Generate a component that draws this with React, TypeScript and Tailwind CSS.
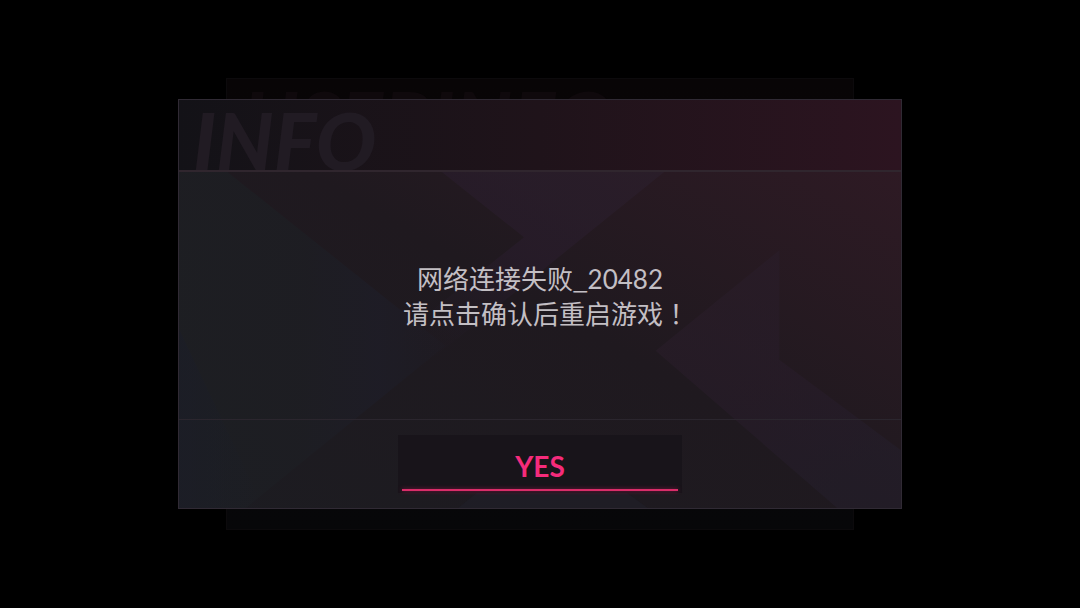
const facets = [
  { points: '0,71 47,71 267,247 67,410 0,410', fill: 'url(#facet-left)', opacity: 0.8 },
  { points: '0,230 85,410 0,410', fill: 'url(#facet-corner)', opacity: 0.7 },
  { points: '262,71 488,71 372,165 222,286 205,250 346,138', fill: 'url(#facet-top)', opacity: 0.7 },
  { points: '602,151 602,261 724,352 724,410 660,410 478,252', fill: 'url(#facet-right)', opacity: 0.6 },
  { points: '370,337 470,410 280,410', fill: '#20202a', opacity: 0.6 },
]

function Facets() {
  return (
    <svg
      aria-hidden="true"
      viewBox="0 0 724 410"
      preserveAspectRatio="none"
      className="absolute inset-0 size-full"
    >
      <defs>
        <linearGradient id="facet-left">
          <stop offset="0" stopColor="#1d1f23" />
          <stop offset="0.45" stopColor="#1d1e23" />
          <stop offset="0.75" stopColor="#1e1d27" />
          <stop offset="1" stopColor="#1e1b22" />
        </linearGradient>
        <linearGradient id="facet-corner">
          <stop offset="0" stopColor="#1b1d27" />
          <stop offset="1" stopColor="#1b1d27" stopOpacity="0" />
        </linearGradient>
        <linearGradient id="facet-top" x1="1" y1="0" x2="0.2" y2="1">
          <stop offset="0" stopColor="#2b1f2c" />
          <stop offset="0.5" stopColor="#281c2b" />
          <stop offset="1" stopColor="#1f1b23" stopOpacity="0" />
        </linearGradient>
        <linearGradient id="facet-right" x1="0" y1="0" x2="0.6" y2="1">
          <stop offset="0" stopColor="#2a1e29" />
          <stop offset="0.6" stopColor="#281c2a" />
          <stop offset="1" stopColor="#241e2b" />
        </linearGradient>
      </defs>
      {facets.map(({ points, fill, opacity }) => (
        <polygon key={points} points={points} fill={fill} opacity={opacity} />
      ))}
    </svg>
  )
}

function BackPanel() {
  return (
    <div
      aria-hidden="true"
      className="col-start-1 row-start-1 h-[452px] w-full max-w-[628px] overflow-hidden border border-[#0c0a0c] bg-linear-to-b from-[#080506] to-[#070709] pt-1 pl-4"
    >
      <p className="font-['Lato',sans-serif] text-[80px] leading-[72px] font-black text-[#0f090c] italic">
        USERINFO
      </p>
    </div>
  )
}

function InfoDialog() {
  return (
    <section
      role="alertdialog"
      aria-labelledby="dialog-title"
      aria-describedby="dialog-message"
      className="relative col-start-1 row-start-1 w-full max-w-[724px] border border-[#302a34] bg-linear-to-tr from-[#1c1c21] via-[#1f191f] to-[#311a25]"
    >
      <Facets />
      <div className="relative">
        <header className="h-[72px] overflow-hidden border-b-2 border-[#30262e] bg-linear-to-r from-[#131217] via-[#1f131a] to-[#2c1420] pl-3.5">
          <h1
            id="dialog-title"
            className="font-['Lato',sans-serif] text-[80px] leading-[80px] font-black text-[#211b23] italic"
          >
            INFO
          </h1>
        </header>
        <div className="flex h-[248px] items-center border-b border-[#2b262e] px-4">
          <p
            id="dialog-message"
            className="w-full text-center font-['Noto_Sans_CJK_SC',sans-serif] text-[26px] leading-[34px] text-[#c3bfc4]"
          >
            网络连接失败_<span className="font-['Lato',sans-serif]">20482</span>
            <br />
            请点击确认后重启游戏
            <span className="-mr-3 font-['Noto_Sans_CJK_TC',sans-serif]">！</span>
          </p>
        </div>
        <footer className="flex justify-center px-4 pt-[15px] pb-[15px]">
          <button
            type="button"
            className="flex h-[58px] w-full max-w-[284px] flex-col bg-[#18141a] px-1 pb-0.5 font-['Lato',sans-serif] text-[28px] font-bold text-[#f52b7b]"
          >
            <span className="flex w-full flex-1 items-center justify-center pt-2">YES</span>
            <span className="h-0.5 w-full bg-[#d92d69] shadow-[0_0_4px_#8c1846]" />
          </button>
        </footer>
      </div>
    </section>
  )
}

export default function App() {
  return (
    <main className="grid min-h-screen place-items-center bg-black">
      <BackPanel />
      <InfoDialog />
    </main>
  )
}
